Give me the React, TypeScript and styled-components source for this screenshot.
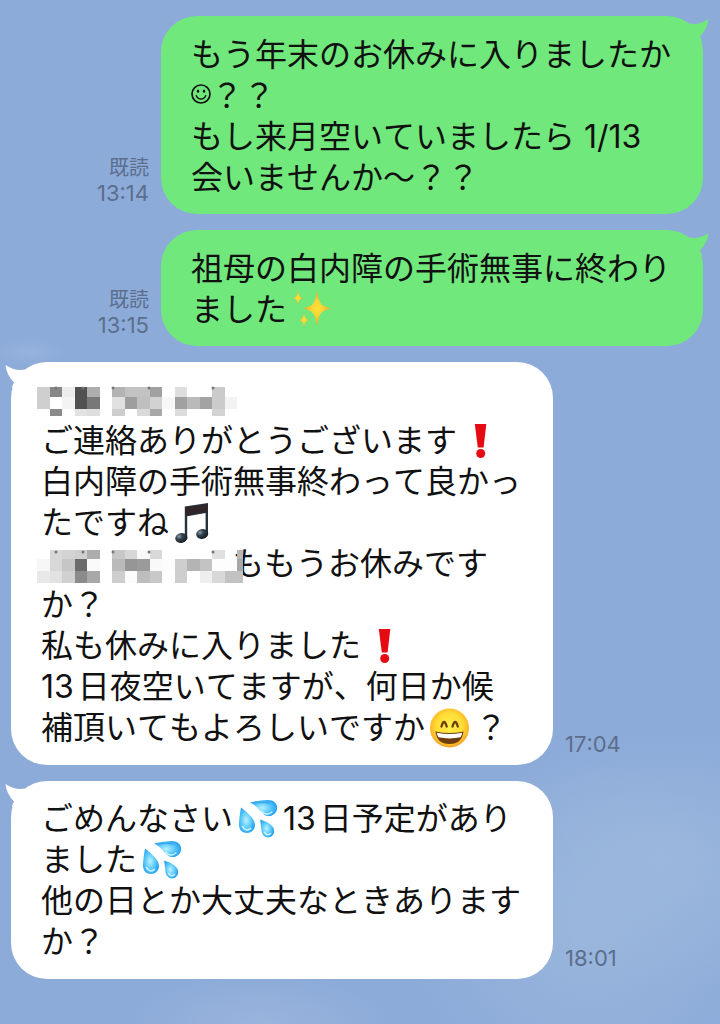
import React from "react";
import styled, { createGlobalStyle } from "styled-components";

const GlobalStyle = createGlobalStyle`
  *, *::before, *::after { box-sizing: border-box; }
  body { margin: 0; background: #8dabd9; }
`;

const Chat = styled.main`
  min-height: 100vh;
  padding: 16px 17px 24px 11px;
  font-family: Inter, "Noto Sans CJK JP", sans-serif;
  font-kerning: none;
  color: #111;
  overflow: hidden;
  background:
    radial-gradient(ellipse 34px 14px at 30px 352px, #96b2dd 0%, rgba(150, 178, 221, 0) 100%),
    radial-gradient(ellipse 190px 130px at 92% 84%, rgba(156, 184, 221, 0.9) 0%, rgba(156, 184, 221, 0) 100%),
    radial-gradient(ellipse 180px 170px at 82% 91%, rgba(156, 184, 221, 0.8) 0%, rgba(156, 184, 221, 0) 100%),
    radial-gradient(ellipse 130px 50px at 36% 100%, rgba(156, 182, 221, 0.8) 0%, rgba(156, 182, 221, 0) 100%),
    #8dabd9;
`;

const MessageList = styled.ol`
  list-style: none;
  margin: 0;
  padding: 0;
  display: flex;
  flex-direction: column;
  gap: 16px;
`;

const MessageRow = styled.li<{ $mine?: boolean }>`
  display: flex;
  flex-direction: ${(p) => (p.$mine ? "row-reverse" : "row")};
  align-items: flex-end;
  gap: 12px;
`;

const Bubble = styled.div<{ $mine?: boolean }>`
  position: relative;
  flex: none;
  min-width: 542px;
  padding: ${(p) => (p.$mine ? "18px 30px 16px" : "17px 30px")};
  border-radius: 36px;
  background: ${(p) => (p.$mine ? "#70e87c" : "#fff")};
`;

const BubbleText = styled.p`
  margin: 0;
  font-size: 32px;
  line-height: 41px;
  white-space: nowrap;
`;

const Num = styled.span`
  margin-right: 4px;
`;

const TailSvg = styled.svg<{ $mine?: boolean }>`
  position: absolute;
  top: 2px;
  ${(p) => (p.$mine ? "right: -6px;" : "left: -6px;")}
`;

const Meta = styled.div<{ $mine?: boolean }>`
  display: flex;
  flex-direction: column;
  align-items: ${(p) => (p.$mine ? "flex-end" : "flex-start")};
  padding-bottom: 8px;
  color: #5b6e8d;
  line-height: 25px;
`;

const ReadMark = styled.span`
  font-size: 20px;
`;

const Time = styled.time`
  font-size: 22px;
`;

const EmojiSvg = styled.svg`
  width: 40px;
  height: 40px;
  margin: -10px 5px -6px;
  vertical-align: middle;
`;

const SmileySvg = styled.svg`
  width: 20px;
  height: 20px;
  margin: -4px 0 4px 0;
  vertical-align: middle;
`;

const MosaicSvg = styled.svg`
  position: relative;
  width: 206px;
  height: 34px;
  margin: -4px -11px -4px -4px;
  vertical-align: middle;
`;

function Tail({ mine }: { mine?: boolean }) {
  return (
    <TailSvg $mine={mine} width="20" height="24" viewBox="0 0 20 24" aria-hidden="true">
      <path
        transform={mine ? undefined : "translate(20 0) scale(-1 1)"}
        fill={mine ? "#70e87c" : "#fff"}
        d="M0 5.500 Q10 7.500 19.500 1 Q18.500 11 11 18.500 Q13 22 13 24 L0 24 Z"
      />
    </TailSvg>
  );
}

function Smiley() {
  return (
    <SmileySvg viewBox="0 0 20 20" role="img" aria-label="笑顔">
      <circle cx="10" cy="10" r="9" fill="none" stroke="#111" strokeWidth="1.700" />
      <ellipse cx="7" cy="7.200" rx="1.200" ry="1.600" fill="#111" />
      <ellipse cx="13" cy="7.200" rx="1.200" ry="1.600" fill="#111" />
      <path d="M5.200 11.500 Q6.500 15 10 15 Q13.500 15 14.800 11.500" fill="none" stroke="#111" strokeWidth="1.300" strokeLinecap="round" />
    </SmileySvg>
  );
}

const star = (x: number, y: number, w: number, h: number) => {
  const a = w * 0.28;
  const b = h * 0.28;
  return (
    `M${x} ${y - h} Q${x + a * 0.5} ${y - b * 1.3} ${x + a} ${y - b} Q${x + a * 1.3} ${y - b * 0.4} ${x + w} ${y} ` +
    `Q${x + a * 1.3} ${y + b * 0.4} ${x + a} ${y + b} Q${x + a * 0.5} ${y + b * 1.3} ${x} ${y + h} ` +
    `Q${x - a * 0.5} ${y + b * 1.3} ${x - a} ${y + b} Q${x - a * 1.3} ${y + b * 0.4} ${x - w} ${y} ` +
    `Q${x - a * 1.3} ${y - b * 0.4} ${x - a} ${y - b} Q${x - a * 0.5} ${y - b * 1.3} ${x} ${y - h} Z`
  );
};

function Sparkles() {
  return (
    <EmojiSvg viewBox="0 0 40 40" role="img" aria-label="きらきら">
      <defs>
        <radialGradient id="spark">
          <stop offset="0" stopColor="#ffe23a" />
          <stop offset="0.400" stopColor="#fdd535" />
          <stop offset="1" stopColor="#e8a431" />
        </radialGradient>
      </defs>
      <path fill="url(#spark)" d={star(25, 18.5, 14, 17.5)} />
      <path fill="url(#spark)" d={star(6, 8, 5.5, 7.5)} />
      <path fill="url(#spark)" d={star(12, 30, 5.5, 7.5)} />
    </EmojiSvg>
  );
}

function Exclamation() {
  return (
    <EmojiSvg viewBox="0 0 40 40" role="img" aria-label="びっくりマーク">
      <path fill="#e60b12" d="M12.800 3 H24.300 L21.600 26.500 H15.800 Z" />
      <circle fill="#e60b12" cx="18.700" cy="32.500" r="4.500" />
    </EmojiSvg>
  );
}

function Notes() {
  return (
    <EmojiSvg viewBox="0 0 40 40" role="img" aria-label="音符">
      <defs>
        <radialGradient id="noteHead" cx="0.350" cy="0.300" r="0.700">
          <stop offset="0" stopColor="#8fa0ae" />
          <stop offset="0.400" stopColor="#35434f" />
          <stop offset="1" stopColor="#161d24" />
        </radialGradient>
      </defs>
      <path fill="#27323b" d="M10.800 3.500 L34 0 V31 H31.600 V10 L13.200 13.200 V36 H10.800 Z" />
      <path fill="#30262a" d="M11.500 4.500 L33.500 1 V9 L11.500 12.800 Z" />
      <ellipse fill="url(#noteHead)" cx="7.300" cy="35" rx="6.100" ry="4.900" transform="rotate(-12 7.300 35)" />
      <ellipse fill="url(#noteHead)" cx="28.200" cy="31" rx="6.100" ry="4.900" transform="rotate(-12 28.200 31)" />
    </EmojiSvg>
  );
}

function Grin() {
  return (
    <EmojiSvg viewBox="0 0 40 40" role="img" aria-label="にっこり">
      <defs>
        <radialGradient id="face" cx="0.500" cy="0.450" r="0.550">
          <stop offset="0" stopColor="#fff04a" />
          <stop offset="0.600" stopColor="#ffdd35" />
          <stop offset="0.880" stopColor="#fdb92b" />
          <stop offset="1" stopColor="#f29a25" />
        </radialGradient>
      </defs>
      <circle cx="19.500" cy="20" r="19.500" fill="url(#face)" />
      <path d="M11.500 18.500 Q14 9.500 16.700 18.500 M22.500 18.500 Q25.200 9.500 27.800 18.500" fill="none" stroke="#6b3d0c" strokeWidth="2.300" strokeLinecap="round" />
      <path d="M5.500 23.500 Q19.500 26.500 33.500 23.500 Q32 36 19.500 36 Q7 36 5.500 23.500 Z" fill="#6e3b11" />
      <path d="M6.800 24.700 Q19.500 27.500 32.200 24.700 Q31.900 27.500 30.500 29.300 Q19.500 31.500 8.500 29.300 Q7.100 27.500 6.800 24.700 Z" fill="#fff" />
    </EmojiSvg>
  );
}

function Sweat() {
  return (
    <EmojiSvg viewBox="0 0 40 40" role="img" aria-label="汗">
      <defs>
        <radialGradient id="drop" cx="0.450" cy="0.500" r="0.600">
          <stop offset="0" stopColor="#bdf0ff" />
          <stop offset="0.450" stopColor="#67d0fb" />
          <stop offset="1" stopColor="#1b9af0" />
        </radialGradient>
      </defs>
      <g transform="translate(-0.500 -1.500)">
        <path fill="url(#drop)" d="M12.500 5 Q22 2.500 30 2.500 C37 2.500 40.500 7 39.500 12 C38 18 31 20.500 26.500 17 C21.500 13 20 9 12.500 5 Z" />
        <path fill="url(#drop)" d="M3.500 10 Q17 20 17.500 27 C17.500 32.500 13.500 35.500 9.500 35.500 C4.500 35.500 1.500 32 1.500 27 Q1.500 21 3.500 10 Z" />
        <path fill="url(#drop)" d="M22.700 22 Q35 26 36.500 32 C37.500 36.500 34 40 30.500 40 C27 40 24.500 37 24 33.500 Q23.500 29 22.700 22 Z" />
        <path d="M17 5.500 Q26 4 31 5.500" fill="none" stroke="#258bdc" strokeWidth="1.200" strokeLinecap="round" opacity="0.600" />
        <path d="M24.500 14 Q29 19 34.500 14.500 M5 29 Q8 34.500 13 31 M27 35 Q30 39 33 36" fill="none" stroke="#e3fbff" strokeWidth="1.600" strokeLinecap="round" opacity="0.800" />
      </g>
    </EmojiSvg>
  );
}

type Band = { y: number; h: number; cells: string[] };

const nameTop: Band[] = [
  { y: 2, h: 10, cells: ["#cfcfcf", "#878787", "#ededed", "#515151", "#adadad", "", "#b3b3b3", "#c3c3c3", "#c3c3c3", "#a1a1a1", "", "#dedede", "", "", "#cbcbcb", ""] },
  { y: 12, h: 12, cells: ["#cfcfcf", "#fff", "#f3f3f3", "#515151", "#787878", "", "#e1e1e1", "#9e9e9e", "#bfbfbf", "#d2d2d2", "#f7f7f7", "#a1a1a1", "#bababa", "#a3a3a3", "#cbcbcb", "#f3f3f3"] },
  { y: 24, h: 7, cells: ["", "#8b8b8b", "", "#e2e2e2", "#dedede", "", "#cdcdcd", "", "#dadada", "#a8a8a8", "", "#dcdcdc", "", "", "#d3d3d3", ""] },
];

const nameInline: Band[] = [
  { y: 1, h: 9, cells: ["", "#d8d8d8", "#d3d3d3", "#cfcfcf", "#acacac", "", "#c7c7c7", "#d7d7d7", "#f8f8f8", "#d9d9d9", "", "", "", "", "#e0e0e0", "", "#b8b8b8"] },
  { y: 10, h: 12, cells: ["#f7f7f7", "#d8d8d8", "#c6c6c6", "#6b6b6b", "#fafafa", "", "#bababa", "#969696", "#9b9b9b", "#f9f9f9", "#fcfcfc", "#cecece", "#b4b4b4", "#c3c3c3", "#fdfdfd", "#fdfdfd", "#a7a7a7"] },
  { y: 22, h: 12, cells: ["#e8e8e8", "#e2e2e2", "#d0d0d0", "#8b8b8b", "#a8a8a8", "", "#cecece", "#fbfbfb", "#bebebe", "#c8c8c8", "", "#cecece", "#fff", "#efefef", "#d8d8d8", "#c2c2c2", "#c2c2c2"] },
];

function Mosaic({ bands }: { bands: Band[] }) {
  return (
    <MosaicSvg viewBox="0 0 206 34" role="img" aria-label="名前は非表示">
      {bands.map((band) =>
        band.cells.map((fill, i) =>
          fill ? (
            <rect key={`${band.y}-${i}`} x={i * 12.5} y={band.y} width={i === 16 ? 6 : 12.5} height={band.h} fill={fill} shapeRendering="crispEdges" />
          ) : null
        )
      )}
      {[19, 46, 76, 112, 176].map((x) => (
        <circle key={x} cx={x} cy="3" r="1.500" fill="#777" />
      ))}
    </MosaicSvg>
  );
}

type MessageProps = { mine?: boolean; time: string; children: React.ReactNode };

function Message({ mine, time, children }: MessageProps) {
  return (
    <MessageRow $mine={mine}>
      <Bubble $mine={mine}>
        <Tail mine={mine} />
        <BubbleText>{children}</BubbleText>
      </Bubble>
      <Meta $mine={mine}>
        {mine && <ReadMark>既読</ReadMark>}
        <Time dateTime={time}>{time}</Time>
      </Meta>
    </MessageRow>
  );
}

export default function App() {
  return (
    <Chat lang="ja">
      <GlobalStyle />
      <MessageList>
        <Message mine time="13:14">
          もう年末のお休みに入りましたか
          <br />
          <Smiley />？？
          <br />
          もし来月空いていましたら 1/13
          <br />
          会いませんか〜？？
        </Message>
        <Message mine time="13:15">
          祖母の白内障の手術無事に終わり
          <br />
          ました
          <Sparkles />
        </Message>
        <Message time="17:04">
          <Mosaic bands={nameTop} />
          <br />
          ご連絡ありがとうございます
          <Exclamation />
          <br />
          白内障の手術無事終わって良かっ
          <br />
          たですね
          <Notes />
          <br />
          <Mosaic bands={nameInline} />
          ももうお休みです
          <br />
          か？
          <br />
          私も休みに入りました
          <Exclamation />
          <br />
          <Num>13</Num>日夜空いてますが、何日か候
          <br />
          補頂いてもよろしいですか
          <Grin />？
        </Message>
        <Message time="18:01">
          ごめんなさい
          <Sweat />
          <Num>13</Num>日予定があり
          <br />
          ました
          <Sweat />
          <br />
          他の日とか大丈夫なときあります
          <br />
          か？
        </Message>
      </MessageList>
    </Chat>
  );
}
